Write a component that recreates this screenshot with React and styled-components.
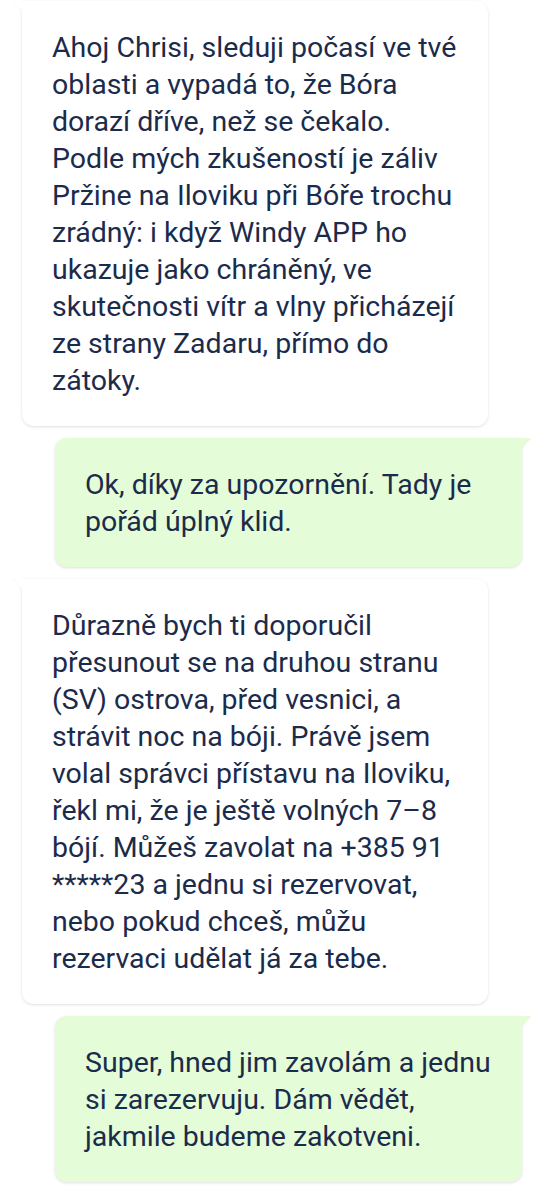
import React from 'react';
import styled, { createGlobalStyle } from 'styled-components';

const GlobalStyle = createGlobalStyle`
  body {
    margin: 0;
    background: #ffffff;
    font-family: Roboto, "Noto Sans", sans-serif;
  }
`;

const messages = [
  {
    from: 'them',
    text: 'Ahoj Chrisi, sleduji počasí ve tvé oblasti a vypadá to, že Bóra dorazí dříve, než se čekalo. Podle mých zkušeností je záliv Pržine na Iloviku při Bóře trochu zrádný: i když Windy APP ho ukazuje jako chráněný, ve skutečnosti vítr a vlny přicházejí ze strany Zadaru, přímo do zátoky.',
  },
  {
    from: 'me',
    text: 'Ok, díky za upozornění. Tady je pořád úplný klid.',
  },
  {
    from: 'them',
    text: 'Důrazně bych ti doporučil přesunout se na druhou stranu (SV) ostrova, před vesnici, a strávit noc na bóji. Právě jsem volal správci přístavu na Iloviku, řekl mi, že je ještě volných 7–8 bójí. Můžeš zavolat na +385 91 *****23 a jednu si rezervovat, nebo pokud chceš, můžu rezervaci udělat já za tebe.',
  },
  {
    from: 'me',
    text: 'Super, hned jim zavolám a jednu si zarezervuju. Dám vědět, jakmile budeme zakotveni.',
  },
];

const Thread = styled.div`
  display: flex;
  flex-direction: column;
  gap: 12px;
  padding: 1px 0 6px;
`;

const Row = styled.div`
  display: flex;
  justify-content: ${p => (p.$mine ? 'flex-end' : 'flex-start')};
  padding: ${p => (p.$mine ? '0 37px 0 0' : '0 0 0 22px')};
`;

const Bubble = styled.div`
  position: relative;
  width: ${p => (p.$mine ? '467px' : '466px')};
  box-sizing: border-box;
  padding: 28px 20px 27px 30px;
  background: ${p => (p.$mine ? '#e4fcd8' : '#ffffff')};
  border-radius: ${p => (p.$mine ? '12px 0 12px 12px' : '0 12px 12px 12px')};
  box-shadow: 0 1px 3px rgba(0, 0, 0, 0.13);
  color: #1b2b4b;
  font-size: 28.5px;
  line-height: 37px;

  &::before {
    content: '';
    position: absolute;
    top: 0;
    ${p => (p.$mine ? 'right: -9px;' : 'left: -9px;')}
    width: 0;
    height: 0;
    border-top: 10px solid ${p => (p.$mine ? '#e4fcd8' : '#ffffff')};
    ${p => (p.$mine ? 'border-right: 9px solid transparent;' : 'border-left: 9px solid transparent;')}
    filter: drop-shadow(0 0 0.5px rgba(0, 0, 0, 0.15));
  }
`;

export default function App() {
  return (
    <>
      <GlobalStyle />
      <Thread>
        {messages.map((m, i) => (
          <Row key={i} $mine={m.from === 'me'}>
            <Bubble $mine={m.from === 'me'}>{m.text}</Bubble>
          </Row>
        ))}
      </Thread>
    </>
  );
}
